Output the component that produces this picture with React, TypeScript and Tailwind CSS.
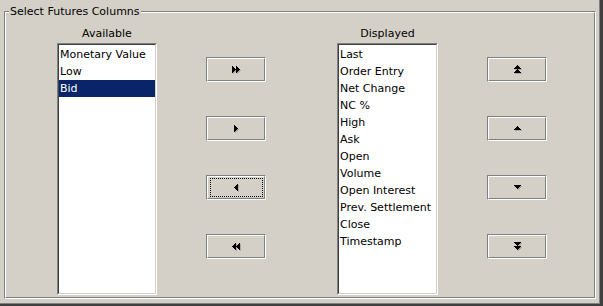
import React from "react";

type Rect = [number, number, number, number];

const RIGHT: Rect[] = [
  [0, 0, 1, 7],
  [1, 1, 1, 5],
  [2, 2, 1, 3],
  [3, 3, 1, 1],
];
const LEFT: Rect[] = [
  [3, 0, 1, 7],
  [2, 1, 1, 5],
  [1, 2, 1, 3],
  [0, 3, 1, 1],
];
const UP: Rect[] = [
  [3, 0, 1, 1],
  [2, 1, 3, 1],
  [1, 2, 5, 1],
  [0, 3, 7, 1],
];
const DOWN: Rect[] = [
  [0, 0, 7, 1],
  [1, 1, 5, 1],
  [2, 2, 3, 1],
  [3, 3, 1, 1],
];

function Glyph({ shapes, w, h }: { shapes: { r: Rect[]; dx: number; dy: number }[]; w: number; h: number }) {
  const all: Rect[] = [];
  shapes.forEach((s) => s.r.forEach(([x, y, ww, hh]) => all.push([x + s.dx, y + s.dy, ww, hh])));
  return (
    <svg width={w + 1} height={h + 1} viewBox={`0 0 ${w + 1} ${h + 1}`} shapeRendering="crispEdges">
      {all.map(([x, y, ww, hh], i) => (
        <rect key={"s" + i} x={x + 1} y={y + 1} width={ww} height={hh} fill="#aaa79f" />
      ))}
      {all.map(([x, y, ww, hh], i) => (
        <rect key={"f" + i} x={x} y={y} width={ww} height={hh} fill="#000" />
      ))}
    </svg>
  );
}

function Button({ children, focused }: { children: React.ReactNode; focused?: boolean }) {
  return (
    <div className="h-[25px] border border-t-[#808080] border-l-[#808080] border-b-white border-r-white">
      <div className="h-full flex border border-t-white border-l-white border-b-[#808080] border-r-[#808080] pt-[1px] pb-[1px] pl-[2px] pr-[1px]">
        <div
          className={
            "flex-1 flex items-center justify-center border " +
            (focused ? "border-dotted border-black" : "border-transparent")
          }
        >
          {children}
        </div>
      </div>
    </div>
  );
}

function ListBox({ items, selected, width }: { items: string[]; selected?: string; width: string }) {
  return (
    <div className={"h-[252px] border border-t-[#808080] border-l-[#808080] border-b-white border-r-white " + width}>
      <div className="h-full border border-t-[#404040] border-l-[#404040] border-b-[#d4d0c8] border-r-[#d4d0c8] bg-white pt-[1px]">
        {items.map((it) => (
          <div
            key={it}
            className={
              "h-[17px] leading-[17px] pl-[1px] whitespace-nowrap overflow-hidden " +
              (it === selected ? "bg-[#0a246a] text-white" : "text-black")
            }
          >
            {it}
          </div>
        ))}
      </div>
    </div>
  );
}

export default function App() {
  const available = ["Monetary Value", "Low", "Bid"];
  const displayed = [
    "Last",
    "Order Entry",
    "Net Change",
    "NC %",
    "High",
    "Ask",
    "Open",
    "Volume",
    "Open Interest",
    "Prev. Settlement",
    "Close",
    "Timestamp",
  ];
  return (
    <div
      className="w-[603px] h-[306px] flex border-r-[3px] border-b-[2px] border-[#404040] text-[11px] text-black"
      style={{ fontFamily: '"DejaVu Sans", Verdana, sans-serif' }}
    >
      <div className="flex-1 flex border-r border-b border-[#808080] bg-[#d4d0c8] pl-[4px] pt-[11px] pr-[3px] pb-[4px]">
        <div className="relative flex-1 flex border border-t-[#808080] border-l-[#808080] border-b-white border-r-white">
          <div className="flex-1 flex items-start border border-t-white border-l-white border-b-[#808080] border-r-[#808080] pl-[51px] pt-[14px]">
            {/* Available */}
            <div className="flex flex-col w-[100px]">
              <div className="h-[14px] leading-[14px] text-center">Available</div>
              <div className="mt-[2px]">
                <ListBox items={available} selected="Bid" width="w-[100px]" />
              </div>
            </div>
            {/* add/remove buttons */}
            <div className="ml-[49px] w-[60px] mt-[30px] flex flex-col gap-[34px]">
              <Button>
                <Glyph w={8} h={7} shapes={[{ r: RIGHT, dx: 0, dy: 0 }, { r: RIGHT, dx: 4, dy: 0 }]} />
              </Button>
              <Button>
                <Glyph w={4} h={7} shapes={[{ r: RIGHT, dx: 0, dy: 0 }]} />
              </Button>
              <Button focused>
                <Glyph w={4} h={7} shapes={[{ r: LEFT, dx: 0, dy: 0 }]} />
              </Button>
              <Button>
                <Glyph w={8} h={7} shapes={[{ r: LEFT, dx: 0, dy: 0 }, { r: LEFT, dx: 4, dy: 0 }]} />
              </Button>
            </div>
            {/* Displayed */}
            <div className="ml-[71px] flex flex-col w-[101px]">
              <div className="h-[14px] leading-[14px] text-center">Displayed</div>
              <div className="mt-[2px]">
                <ListBox items={displayed} width="w-[101px]" />
              </div>
            </div>
            {/* order buttons */}
            <div className="ml-[49px] w-[60px] mt-[30px] flex flex-col gap-[34px]">
              <Button>
                <Glyph w={7} h={8} shapes={[{ r: UP, dx: 0, dy: 0 }, { r: UP, dx: 0, dy: 4 }]} />
              </Button>
              <Button>
                <Glyph w={7} h={4} shapes={[{ r: UP, dx: 0, dy: 0 }]} />
              </Button>
              <Button>
                <Glyph w={7} h={4} shapes={[{ r: DOWN, dx: 0, dy: 0 }]} />
              </Button>
              <Button>
                <Glyph w={7} h={8} shapes={[{ r: DOWN, dx: 0, dy: 0 }, { r: DOWN, dx: 0, dy: 4 }]} />
              </Button>
            </div>
          </div>
          <span className="absolute left-[4px] top-[-7px] h-[14px] leading-[14px] px-[1px] bg-[#d4d0c8] whitespace-nowrap">
            Select Futures Columns
          </span>
        </div>
      </div>
    </div>
  );
}
